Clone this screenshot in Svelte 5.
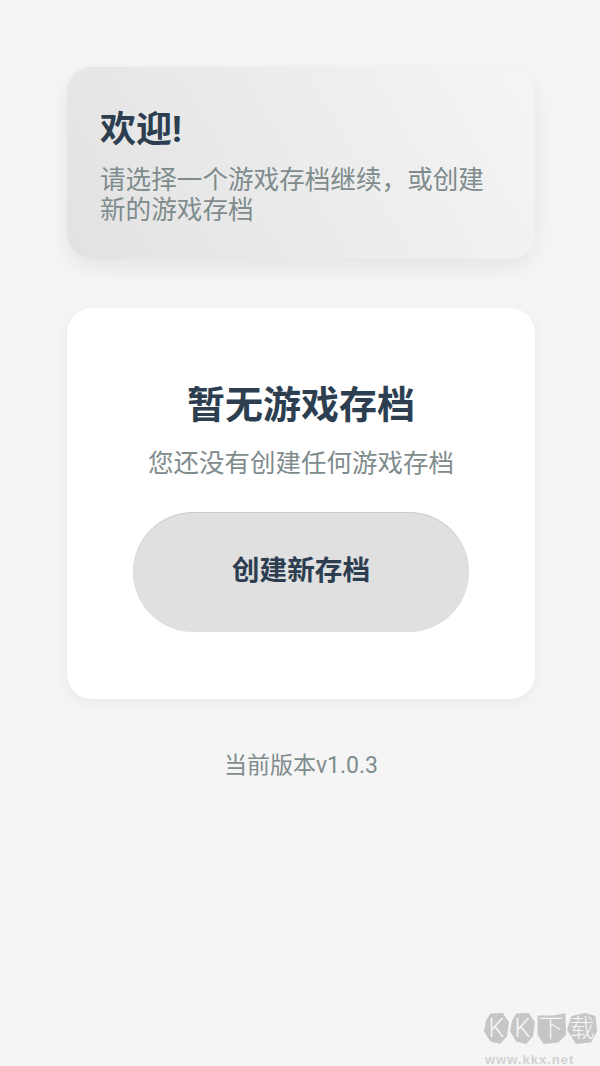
<script>
  let version = "v1.0.3";
</script>

<div class="page">
  <div class="welcome">
    <h1>欢迎!</h1>
    <p>请选择一个游戏存档继续，或创建新的游戏存档</p>
  </div>

  <div class="empty">
    <h2>暂无游戏存档</h2>
    <p>您还没有创建任何游戏存档</p>
    <button class="create">创建新存档</button>
  </div>

  <div class="version">当前版本{version}</div>

  <div class="watermark">
    <div class="stones">
      <span class="stone s1">K</span>
      <span class="stone s2">K</span>
      <span class="stone s3">下</span>
      <span class="stone s4">载</span>
    </div>
    <div class="site">www.kkx.net</div>
  </div>
</div>

<style>
  :global(body) {
    margin: 0;
    background: #f5f5f5;
  }
  .page {
    position: relative;
    box-sizing: border-box;
    height: 1066px;
    padding: 67px 65px 0 67px;
    display: flex;
    flex-direction: column;
    overflow: hidden;
    font-family: Roboto, "Noto Sans CJK SC", sans-serif;
  }
  .welcome {
    box-sizing: border-box;
    height: 192px;
    padding: 39px 33px 0;
    border-radius: 25px;
    background: linear-gradient(60deg, #e2e2e2, #f5f5f5);
    box-shadow: 0 8px 22px rgba(0, 0, 0, 0.07);
  }
  h1 {
    margin: 0;
    font-size: 36px;
    line-height: 48px;
    font-weight: 700;
    color: #2c3e50;
  }
  .welcome p {
    margin: 11px 0 0;
    font-size: 25.6px;
    line-height: 30px;
    color: #7f8c8d;
  }
  .empty {
    box-sizing: border-box;
    height: 391px;
    margin-top: 49px;
    padding-top: 69px;
    border-radius: 25px;
    background: #fff;
    box-shadow: 0 4px 16px rgba(0, 0, 0, 0.05);
    display: flex;
    flex-direction: column;
    align-items: center;
  }
  h2 {
    margin: 0;
    font-size: 38px;
    line-height: 56px;
    font-weight: 700;
    color: #2c3e50;
  }
  .empty p {
    margin: 11px 0 0;
    font-size: 25.5px;
    line-height: 38px;
    color: #7f8c8d;
  }
  .create {
    width: 336px;
    height: 120px;
    margin-top: 30px;
    padding: 0 0 8px;
    border: none;
    border-radius: 60px;
    background: #e0e0e0;
    box-shadow: inset 0 1px 1px rgba(0, 0, 0, 0.1);
    font-family: inherit;
    font-size: 27.7px;
    font-weight: 700;
    color: #2c3e50;
  }
  .version {
    margin-top: 50px;
    text-align: center;
    font-size: 23px;
    line-height: 34px;
    color: #7f8c8d;
  }
  .watermark {
    position: absolute;
    left: 484px;
    top: 1013px;
    width: 116px;
  }
  .stones {
    display: flex;
    gap: 1px;
  }
  .stone {
    height: 31px;
    display: flex;
    align-items: center;
    justify-content: center;
    background: #c6c6c6;
    font-size: 25px;
    font-weight: 300;
    line-height: 31px;
    color: #f5f5f5;
  }
  .s1, .s2 {
    width: 25px;
    clip-path: polygon(25% 2%, 75% 0, 100% 30%, 92% 75%, 65% 100%, 25% 92%, 0 60%, 8% 25%);
  }
  .s3 {
    width: 30px;
    clip-path: polygon(5% 8%, 60% 8%, 98% 0, 100% 70%, 75% 95%, 25% 100%, 5% 70%);
  }
  .s4 {
    width: 30px;
    clip-path: polygon(15% 10%, 60% 0, 95% 10%, 100% 60%, 80% 95%, 30% 100%, 0 55%);
  }
  .site {
    margin: 10px 0 0 1px;
    font-family: "Liberation Sans", sans-serif;
    font-size: 13px;
    font-weight: 700;
    letter-spacing: 1px;
    line-height: 12px;
    color: #d2d2d2;
  }
</style>
